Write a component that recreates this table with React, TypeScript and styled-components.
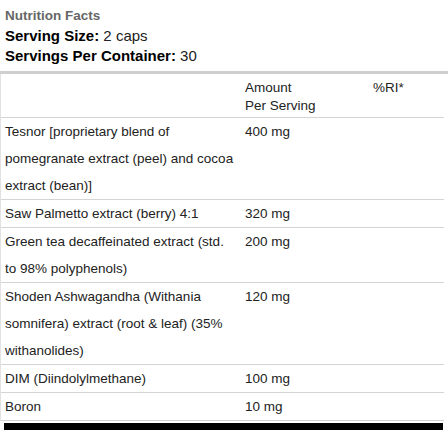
import React from "react";
import styled, { createGlobalStyle } from "styled-components";

const Global = createGlobalStyle`
  html, body { margin: 0; padding: 0; background: #fff; }
  body { font-family: "Liberation Sans", Arial, sans-serif; color: #222; }
`;

const Wrap = styled.div`
  width: 448px;
  padding: 6px 0 0 0;
  box-sizing: border-box;
`;

const Head = styled.div`
  padding: 0 5px 5px;
  font-size: 13px;
  line-height: 20px;
  border-bottom: 3px solid #cfcfcf;
`;

const Title = styled.div`
  font-weight: bold;
  font-size: 13.5px;
  color: #666;
`;

const Line = styled.div`
  color: #222;
  font-size: 15px;
  b { font-weight: bold; color: #000; }
`;

const Table = styled.div`
  width: 443px;
  border-left: 1px solid #e2e2e2;
  font-size: 13.5px;
  color: #222;
`;

const Row = styled.div<{ $header?: boolean }>`
  display: grid;
  grid-template-columns: 240px 128px 1fr;
  border-bottom: 1px solid #d4d4d4;
  line-height: ${(p) => (p.$header ? "18px" : "27px")};
  padding: ${(p) => (p.$header ? "5px 0 2px" : "0")};
`;

const Cell = styled.div`
  padding-left: 4px;
  padding-right: 5px;
`;

const Foot = styled.div`
  margin: 2px 0 0 4px;
  width: 439px;
  height: 8px;
  background: #000;
`;

const rows: [string, string][] = [
  ["Tesnor [proprietary blend of pomegranate extract (peel) and cocoa extract (bean)]", "400 mg"],
  ["Saw Palmetto extract (berry) 4:1", "320 mg"],
  ["Green tea decaffeinated extract (std. to 98% polyphenols)", "200 mg"],
  ["Shoden Ashwagandha (Withania somnifera) extract (root & leaf) (35% withanolides)", "120 mg"],
  ["DIM (Diindolylmethane)", "100 mg"],
  ["Boron", "10 mg"],
];

export default function App() {
  return (
    <Wrap>
      <Global />
      <Head>
        <Title>Nutrition Facts</Title>
        <Line>
          <b>Serving Size:</b> 2 caps
        </Line>
        <Line>
          <b>Servings Per Container:</b> 30
        </Line>
      </Head>
      <Table>
        <Row $header>
          <Cell />
          <Cell>
            Amount
            <br />
            Per Serving
          </Cell>
          <Cell>%RI*</Cell>
        </Row>
        {rows.map(([n, v]) => (
          <Row key={n}>
            <Cell>{n}</Cell>
            <Cell>{v}</Cell>
            <Cell />
          </Row>
        ))}
      </Table>
      <Foot />
    </Wrap>
  );
}
